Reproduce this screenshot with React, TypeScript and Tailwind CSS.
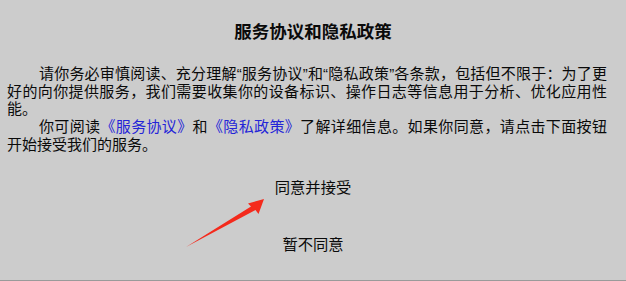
const cjk = "font-['Liberation_Sans','Noto_Sans_CJK_SC',sans-serif]";

const Line = ({ children, indent, last }: { children: React.ReactNode; indent?: boolean; last?: boolean }) => (
  <span
    className={`block ${indent ? "indent-[32px]" : ""} ${
      last ? "text-left" : "text-justify [text-align-last:justify]"
    }`}
  >
    {children}
  </span>
);

const Link = ({ children }: { children: React.ReactNode }) => (
  <span className="text-[#2424d8]">{children}</span>
);

// 标注箭头（截图上的红色箭头）
const Arrow = () => (
  <svg
    className="absolute inset-0 pointer-events-none"
    width="626"
    height="281"
    viewBox="0 0 626 281"
  >
    <polygon
      points="186,247 251,206.5 248,203.5 264,199 258.5,214 255.5,210 186,247"
      fill="#f42a1c"
    />
  </svg>
);

export default function App() {
  return (
    <div
      className={`relative h-[281px] w-[626px] bg-[#cccccc] border-b border-[#9a9a9a] text-[#0a0a0a] ${cjk}`}
    >
      <h1 className="pt-[20px] text-center text-[17.5px] leading-[24px] font-bold">
        服务协议和隐私政策
      </h1>

      <div className="mt-[21px] pl-[7px] pr-[19px] text-[15px] leading-[17.7px]">
        <p>
          <Line indent>
            请你务必审慎阅读、充分理解“服务协议”和“隐私政策”各条款，包括但不限于：为了更
          </Line>
          <Line>好的向你提供服务，我们需要收集你的设备标识、操作日志等信息用于分析、优化应用性</Line>
          <Line last>能。</Line>
        </p>
        <p>
          <Line indent>
            你可阅读<Link>《服务协议》</Link>和<Link>《隐私政策》</Link>了解详细信息。如果你同意，请点击下面按钮
          </Line>
          <Line last>开始接受我们的服务。</Line>
        </p>
      </div>

      <div className="mt-[24px] flex flex-col items-center text-[15.3px] leading-[20px]">
        <button className="px-4 py-0">同意并接受</button>
        <button className="mt-[37px] px-4 py-0">暂不同意</button>
      </div>

      <Arrow />
    </div>
  );
}
